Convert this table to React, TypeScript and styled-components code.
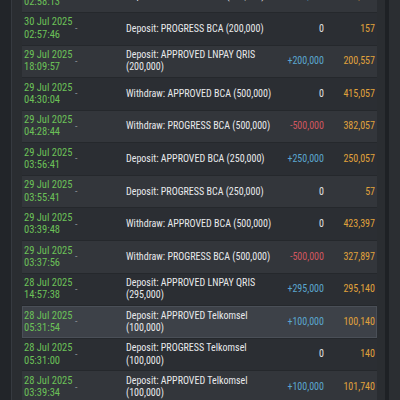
import React from "react";
import styled, { createGlobalStyle } from "styled-components";

type Tone = "in" | "out" | "zero";

type Tx = {
  date: string;
  time: string;
  desc: string;
  amount: string;
  tone: Tone;
  balance: string;
  active?: boolean;
};

const history: Tx[] = [
  { date: "30 Jul 2025", time: "02:58:13", desc: "Deposit: APPROVED BCA (200,000)", amount: "+200,000", tone: "in", balance: "200,157" },
  { date: "30 Jul 2025", time: "02:57:46", desc: "Deposit: PROGRESS BCA (200,000)", amount: "0", tone: "zero", balance: "157" },
  { date: "29 Jul 2025", time: "18:09:57", desc: "Deposit: APPROVED LNPAY QRIS (200,000)", amount: "+200,000", tone: "in", balance: "200,557" },
  { date: "29 Jul 2025", time: "04:30:04", desc: "Withdraw: APPROVED BCA (500,000)", amount: "0", tone: "zero", balance: "415,057" },
  { date: "29 Jul 2025", time: "04:28:44", desc: "Withdraw: PROGRESS BCA (500,000)", amount: "-500,000", tone: "out", balance: "382,057" },
  { date: "29 Jul 2025", time: "03:56:41", desc: "Deposit: APPROVED BCA (250,000)", amount: "+250,000", tone: "in", balance: "250,057" },
  { date: "29 Jul 2025", time: "03:55:41", desc: "Deposit: PROGRESS BCA (250,000)", amount: "0", tone: "zero", balance: "57" },
  { date: "29 Jul 2025", time: "03:39:48", desc: "Withdraw: APPROVED BCA (500,000)", amount: "0", tone: "zero", balance: "423,397" },
  { date: "29 Jul 2025", time: "03:37:56", desc: "Withdraw: PROGRESS BCA (500,000)", amount: "-500,000", tone: "out", balance: "327,897" },
  { date: "28 Jul 2025", time: "14:57:38", desc: "Deposit: APPROVED LNPAY QRIS (295,000)", amount: "+295,000", tone: "in", balance: "295,140" },
  { date: "28 Jul 2025", time: "05:31:54", desc: "Deposit: APPROVED Telkomsel (100,000)", amount: "+100,000", tone: "in", balance: "100,140", active: true },
  { date: "28 Jul 2025", time: "05:31:00", desc: "Deposit: PROGRESS Telkomsel (100,000)", amount: "0", tone: "zero", balance: "140" },
  { date: "28 Jul 2025", time: "03:39:34", desc: "Deposit: APPROVED Telkomsel (100,000)", amount: "+100,000", tone: "in", balance: "101,740" },
];

const GlobalStyle = createGlobalStyle`
  html, body {
    margin: 0;
    padding: 0;
    background: #24272b;
  }
  body {
    font-family: "Liberation Sans Narrow", "Arial Narrow", "Roboto Condensed", Roboto, sans-serif;
  }
`;

const Page = styled.div`
  display: flex;
  height: 400px;
  overflow: hidden;
  background: #2a2d31;
`;

const LeftRail = styled.div`
  flex: none;
  width: 11px;
  background: #222529;
  border-right: 1px solid #363a40;
`;

const Panel = styled.div`
  flex: 1;
  min-width: 0;
  padding: 0 8px 0 10px;
  background: #2a2d31;
  overflow: hidden;
`;

const RightRail = styled.div`
  flex: none;
  width: 11px;
  background: #2b2e32;
  border-left: 4px solid #1e2125;
`;

const List = styled.div`
  margin-top: -19.7px;
`;

const Row = styled.div<{ $striped: boolean; $active?: boolean }>`
  display: grid;
  grid-template-columns: 52px 50px 156px 46px 1fr;
  align-items: center;
  padding: 3.5px 0;
  font-size: 10px;
  line-height: 12.3px;
  border-bottom: 1px solid #25282c;
  background: ${({ $striped, $active }) =>
    $active ? "#3d4148" : $striped ? "#33363b" : "#2b2e33"};
  box-shadow: ${({ $active }) => ($active ? "inset 0 0 0 1px #4a4f57" : "none")};
`;

const DateCell = styled.div`
  padding-left: 2px;
  font-size: 10.5px;
  color: #6cc158;
  white-space: nowrap;
`;

const Dash = styled.div`
  padding-left: 1px;
  padding-top: 1px;
  color: #858b93;
`;

const Desc = styled.div`
  padding: 0 2px;
  color: #e8e9eb;
`;

const toneColor: Record<Tone, string> = {
  in: "#5ba7cf",
  out: "#cf5660",
  zero: "#e3e3e3",
};

const Amount = styled.div<{ $tone: Tone }>`
  padding-right: 2px;
  text-align: right;
  white-space: nowrap;
  color: ${({ $tone }) => toneColor[$tone]};
`;

const Balance = styled.div`
  padding-right: 2px;
  text-align: right;
  white-space: nowrap;
  color: #e0a23b;
`;

export default function App() {
  return (
    <>
      <GlobalStyle />
      <Page>
        <LeftRail />
        <Panel>
          <List>
            {history.map((tx, i) => (
              <Row key={tx.time + i} $striped={i % 2 === 0} $active={tx.active}>
                <DateCell>
                  {tx.date}
                  <br />
                  {tx.time}
                </DateCell>
                <Dash>-</Dash>
                <Desc>{tx.desc}</Desc>
                <Amount $tone={tx.tone}>{tx.amount}</Amount>
                <Balance>{tx.balance}</Balance>
              </Row>
            ))}
          </List>
        </Panel>
        <RightRail />
      </Page>
    </>
  );
}
